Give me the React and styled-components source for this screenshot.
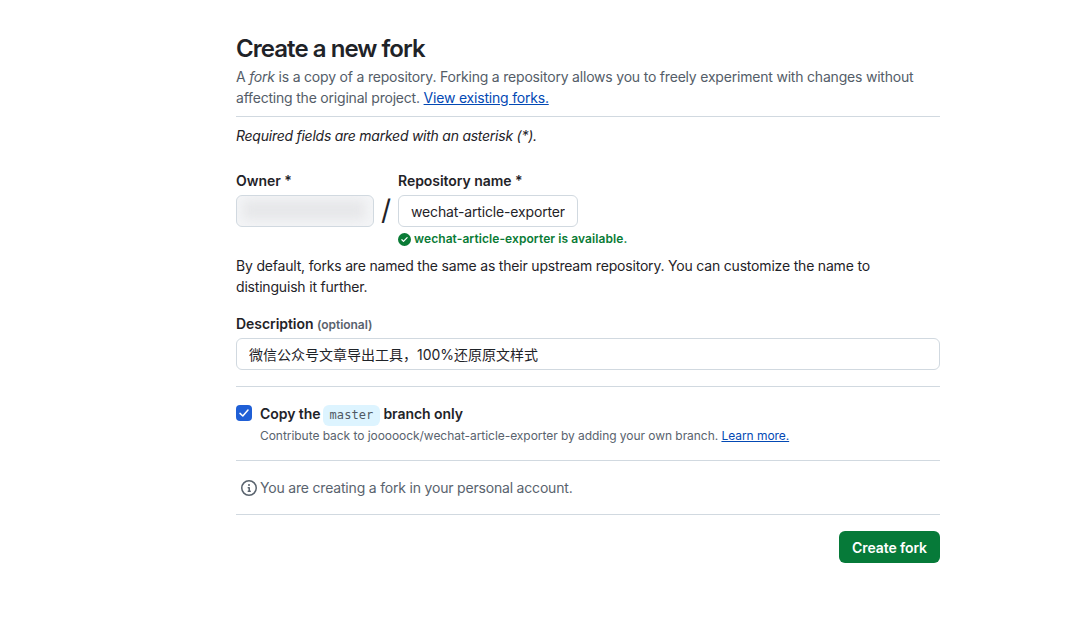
import React from 'react'
import styled, { createGlobalStyle } from 'styled-components'

const GlobalStyle = createGlobalStyle`
  html, body { margin: 0; padding: 0; background: #fff; }
  body {
    font-family: Inter, "Noto Sans CJK SC", sans-serif;
    font-size: 14px;
    line-height: 21px;
    color: #1f2328;
    letter-spacing: -0.19px;
  }
`

const Page = styled.main`
  width: 704px;
  margin-left: 236px;
  padding-top: 31px;
`
const Title = styled.h1`
  margin: 0 0 -1px;
  font-size: 24px;
  line-height: 36px;
  font-weight: 600;
  letter-spacing: -0.95px;
`
const Lead = styled.p`
  margin: 0;
  padding-bottom: 8px;
  color: #545d68;
  letter-spacing: -0.2px;
  border-bottom: 1px solid #d1d9e0;
`
const Link = styled.a`
  color: #0349b4;
  text-decoration: underline;
  font-size: ${p => p.$small ? '12px' : 'inherit'};
`
const Required = styled.p`
  margin: 8px 0 0;
  font-style: italic;
  letter-spacing: -0.25px;
`
const NameRow = styled.div`
  display: flex;
  align-items: flex-start;
  margin-top: 24px;
`
const Field = styled.div`
  display: flex;
  flex-direction: column;
`
const Label = styled.label`
  display: block;
  font-weight: 600;
  font-size: 14px;
  line-height: 21px;
  margin-bottom: 4px;
  letter-spacing: -0.05px;
`
const Optional = styled.span`
  font-size: 12px;
  line-height: 1;
  color: #59636e;
`
const OwnerBox = styled.div`
  position: relative;
  box-sizing: border-box;
  width: 138px;
  height: 32px;
  border: 1px solid #d1d9e0;
  border-radius: 6px;
  background: #f4f5f7;
  overflow: hidden;
`
const OwnerBlur = styled.div`
  position: absolute;
  inset: 4px 8px 6px 6px;
  background: #e6e7e9;
  filter: blur(6px);
`
const Slash = styled.span`
  width: 24px;
  margin-top: 23px;
  text-align: center;
  font-size: 28px;
  line-height: 34px;
  color: #1f2328;
`
const Input = styled.input`
  box-sizing: border-box;
  display: block;
  width: ${p => p.$width || '100%'};
  height: 32px;
  padding: 0 12px;
  border: 1px solid #d1d9e0;
  border-radius: 6px;
  background: #fff;
  color: #1f2328;
  font-family: inherit;
  font-size: 14px;
  letter-spacing: ${p => p.$tracking || '0'};
  outline: none;
`
const Available = styled.div`
  display: flex;
  align-items: center;
  gap: 3px;
  margin-top: 3px;
  font-size: 12px;
  line-height: 18px;
  font-weight: 600;
  letter-spacing: 0.08px;
  color: #0a7b36;
`
const Note = styled.p`
  margin: 7px 0 0;
`
const DescriptionField = styled.div`
  margin-top: 16px;
`
const Divider = styled.hr`
  margin: 16px 0;
  border: 0;
  border-top: 1px solid #d1d9e0;
`
const CheckRow = styled.div`
  display: flex;
  gap: 8px;
`
const Box = styled.span`
  display: flex;
  align-items: center;
  justify-content: center;
  flex: none;
  width: 16px;
  height: 16px;
  margin-top: 2px;
  border-radius: 4px;
  background: #1f5fd6;
`
const CheckText = styled.div`
  display: flex;
  flex-direction: column;
`
const CheckTitle = styled.div`
  font-weight: 600;
  line-height: 22px;
  letter-spacing: -0.05px;
`
const Branch = styled.code`
  display: inline-block;
  padding: 0 6.5px;
  margin-left: -1px;
  border-radius: 6px;
  background: #ddf4ff;
  color: #4f5964;
  font-family: "DejaVu Sans Mono", monospace;
  font-size: 12px;
  font-weight: 400;
  line-height: 21px;
  letter-spacing: 0.1px;
`
const Hint = styled.div`
  margin-top: 2px;
  font-size: 12px;
  line-height: 16px;
  letter-spacing: -0.05px;
  color: #59636e;
`
const InfoRow = styled.div`
  display: flex;
  align-items: center;
  gap: 3px;
  padding-left: 5px;
  color: #59636e;
`
const Actions = styled.div`
  display: flex;
  justify-content: flex-end;
`
const Button = styled.button`
  height: 32px;
  padding: 0 13px;
  border: 0;
  border-radius: 6px;
  background: #067a39;
  color: #fff;
  font-family: inherit;
  font-size: 14px;
  font-weight: 600;
  letter-spacing: -0.1px;
`

const CheckCircle = () => (
  <svg width="13" height="13" viewBox="0 0 16 16" fill="#0a7b36">
    <path d="M0 8a8 8 0 1 1 16 0A8 8 0 0 1 0 8Zm11.78-1.72a.75.75 0 0 0-1.06-1.06L6.75 9.19 5.28 7.72a.75.75 0 0 0-1.06 1.06l2 2a.75.75 0 0 0 1.06 0l4.5-4.5Z" />
  </svg>
)

const InfoIcon = () => (
  <svg width="16" height="16" viewBox="0 0 16 16" fill="#59636e">
    <path d="M0 8a8 8 0 1 1 16 0A8 8 0 0 1 0 8Zm8-6.5a6.5 6.5 0 1 0 0 13 6.5 6.5 0 0 0 0-13ZM6.5 7.75A.75.75 0 0 1 7.25 7h1a.75.75 0 0 1 .75.75v2.75h.25a.75.75 0 0 1 0 1.5h-2a.75.75 0 0 1 0-1.5h.25v-2h-.25a.75.75 0 0 1-.75-.75ZM8 6a1 1 0 1 1 0-2 1 1 0 0 1 0 2Z" />
  </svg>
)

const Tick = () => (
  <svg width="12" height="12" viewBox="0 0 12 12" fill="none" stroke="#fff" strokeWidth="1.5" strokeLinecap="round" strokeLinejoin="round">
    <path d="M2 6.4 4.8 9 10 3" />
  </svg>
)

export default function App() {
  return (
    <Page>
      <GlobalStyle />
      <Title>Create a new fork</Title>
      <Lead>
        A <em>fork</em> is a copy of a repository. Forking a repository allows you to freely experiment with changes without affecting the original project. <Link href="#">View existing forks.</Link>
      </Lead>
      <Required>Required fields are marked with an asterisk (*).</Required>

      <NameRow>
        <Field>
          <Label>Owner *</Label>
          <OwnerBox><OwnerBlur /></OwnerBox>
        </Field>
        <Slash>/</Slash>
        <Field>
          <Label>Repository name *</Label>
          <Input $width="180px" $tracking="-0.15px" defaultValue="wechat-article-exporter" />
          <Available><CheckCircle /> wechat-article-exporter is available.</Available>
        </Field>
      </NameRow>

      <Note>By default, forks are named the same as their upstream repository. You can customize the name to distinguish it further.</Note>

      <DescriptionField>
        <Label>Description <Optional>(optional)</Optional></Label>
        <Input defaultValue="微信公众号文章导出工具，100%还原原文样式" />
      </DescriptionField>

      <Divider />

      <CheckRow>
        <Box><Tick /></Box>
        <CheckText>
          <CheckTitle>Copy the <Branch>master</Branch> branch only</CheckTitle>
          <Hint>Contribute back to jooooock/wechat-article-exporter by adding your own branch. <Link href="#" $small>Learn more.</Link></Hint>
        </CheckText>
      </CheckRow>

      <Divider />

      <InfoRow><InfoIcon /> You are creating a fork in your personal account.</InfoRow>

      <Divider />

      <Actions><Button>Create fork</Button></Actions>
    </Page>
  )
}
